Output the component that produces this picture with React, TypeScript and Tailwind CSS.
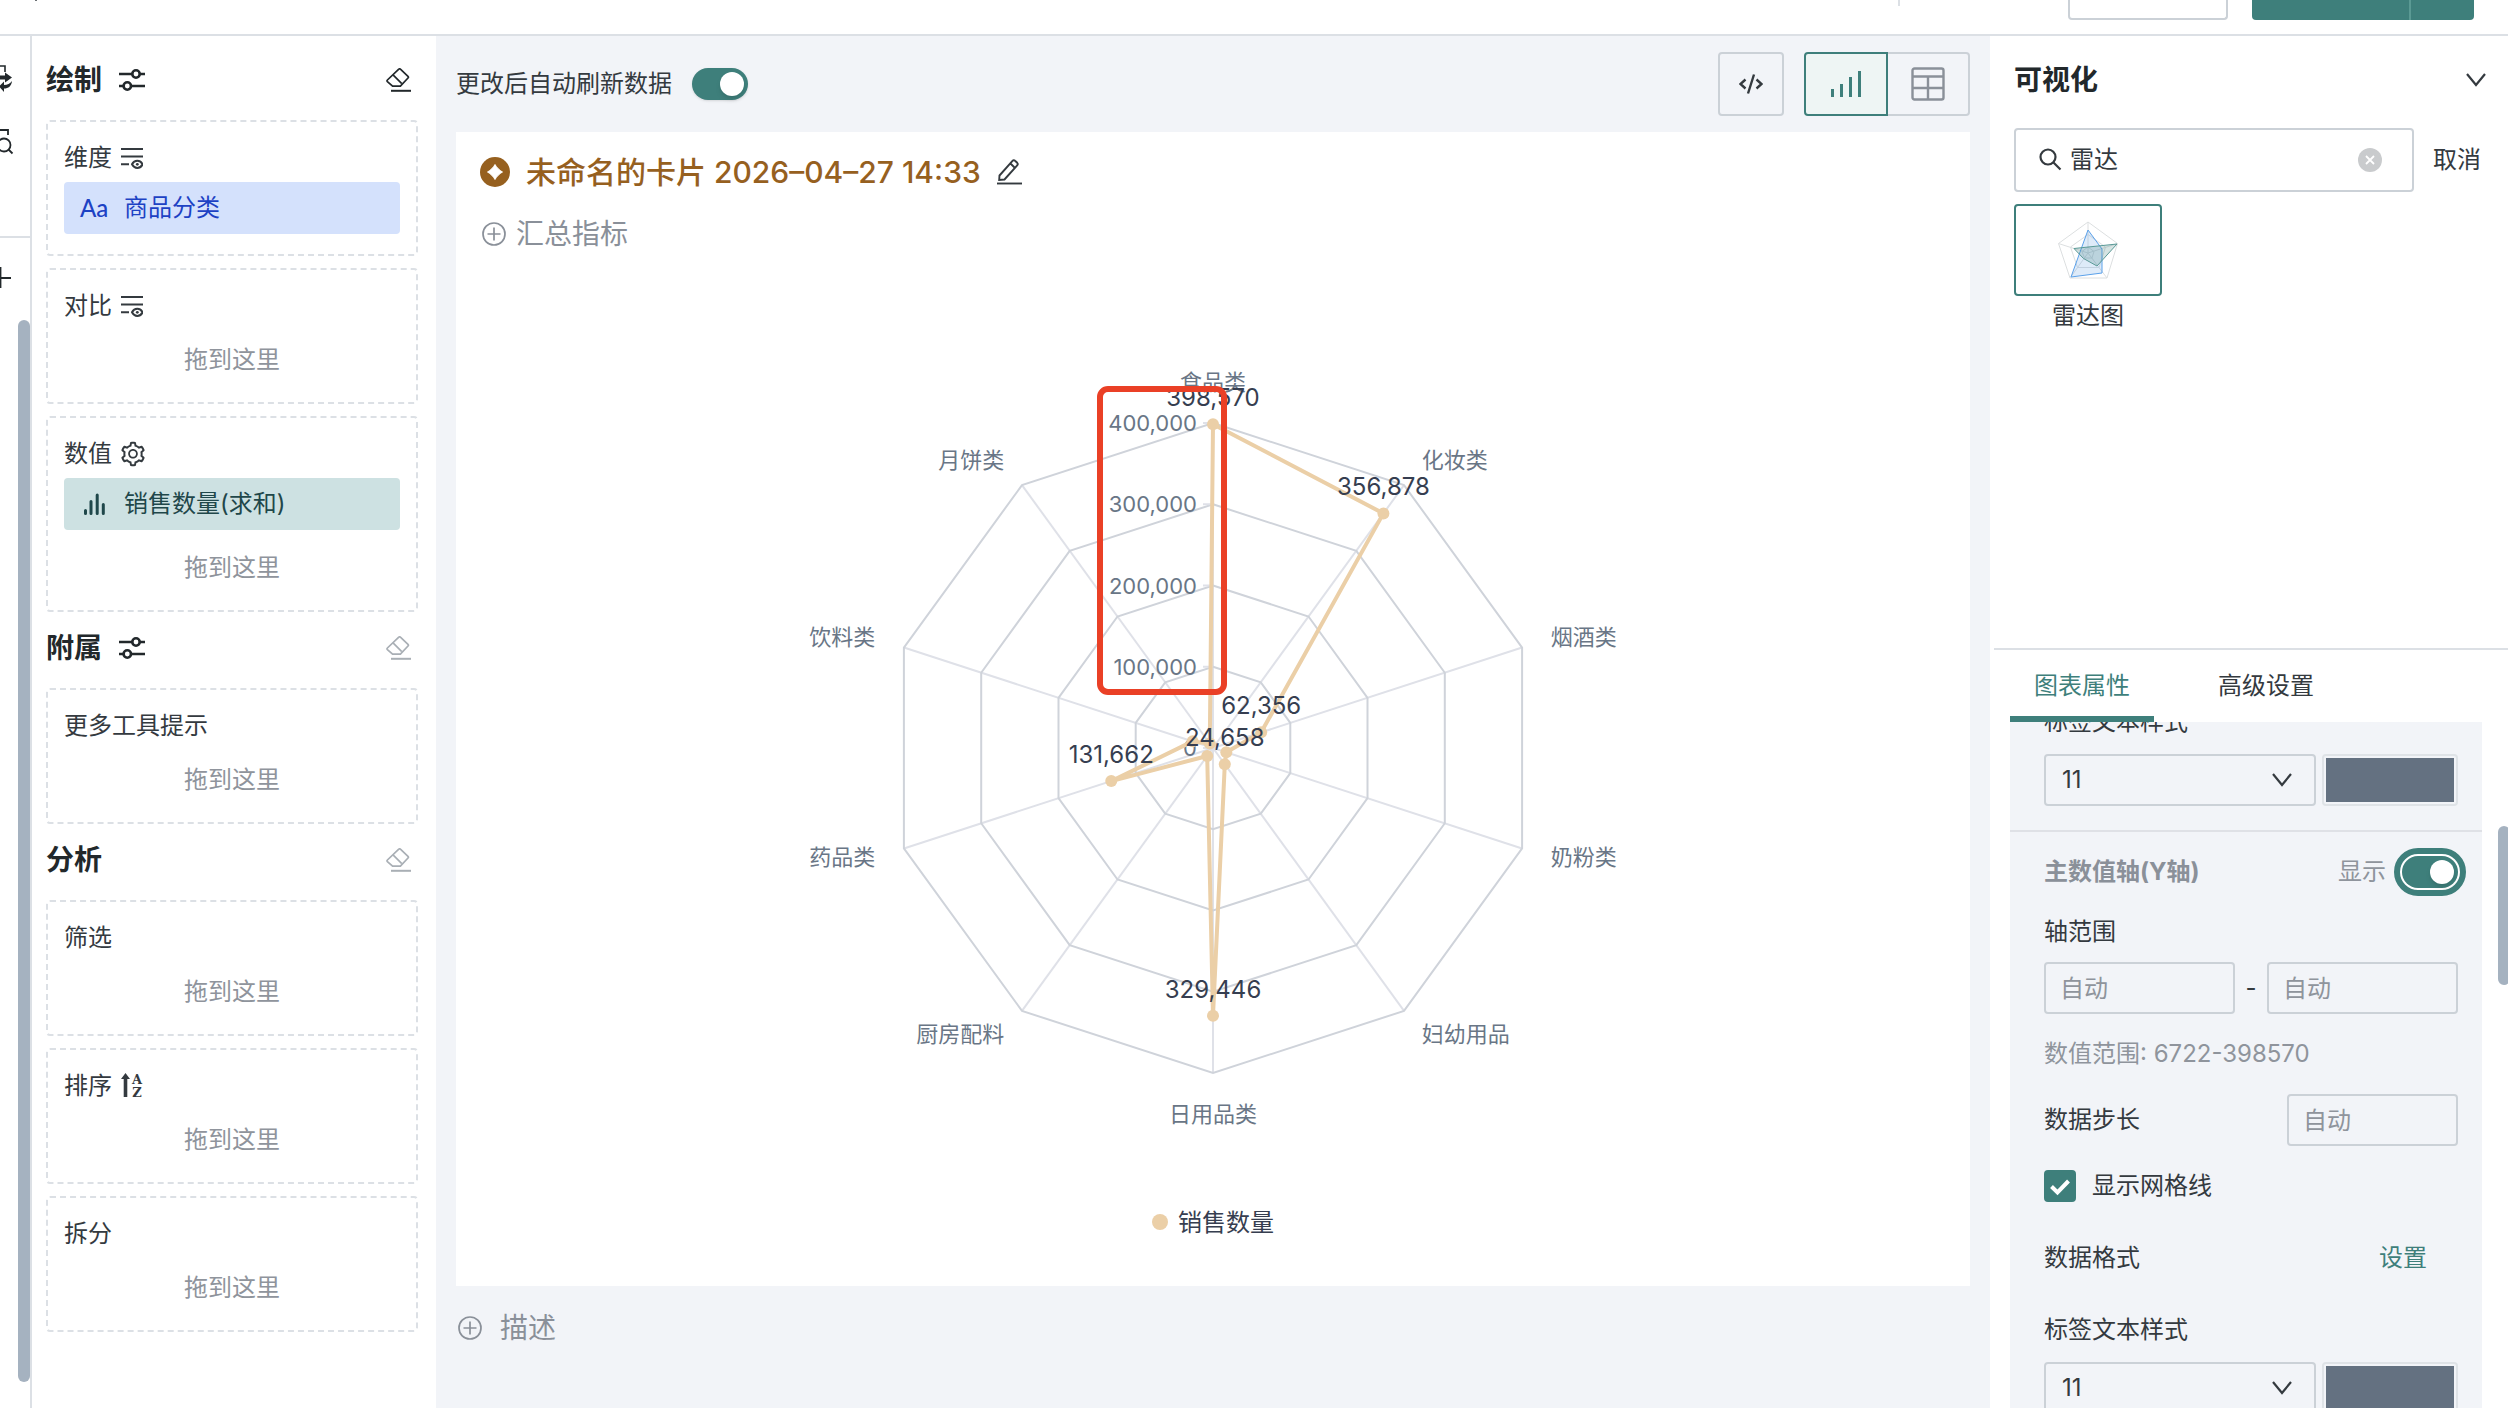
import { useState } from 'react'
import type { ReactNode } from 'react'
import clsx from 'clsx'
import { AiOutlineSetting } from 'react-icons/ai'

type RadarItem = { name: string; value: number; showValue?: boolean }

const radarData: RadarItem[] = [
  { name: '食品类', value: 398570, showValue: true },
  { name: '化妆类', value: 356878, showValue: true },
  { name: '烟酒类', value: 62356, showValue: true },
  { name: '奶粉类', value: 17231 },
  { name: '妇幼用品', value: 24658, showValue: true },
  { name: '日用品类', value: 329446, showValue: true },
  { name: '厨房配料', value: 12100 },
  { name: '药品类', value: 131662, showValue: true },
  { name: '饮料类', value: 26400 },
  { name: '月饼类', value: 6722 },
]

const MAX = 400000
const RADIUS = 325
const CX = 757
const CY = 492

function polar(index: number, r: number) {
  const angle = (Math.PI * 2 * index) / radarData.length
  return { x: CX + Math.sin(angle) * r, y: CY - Math.cos(angle) * r }
}

function toPoints(list: { x: number; y: number }[]) {
  return list.map((p) => `${p.x.toFixed(1)},${p.y.toFixed(1)}`).join(' ')
}

/* ---------- icons ---------- */

function SlidersIcon() {
  return (
    <svg className="h-6 w-[26px]" viewBox="0 0 26 24" fill="none" stroke="currentColor" strokeWidth="2.6">
      <path d="M0 6h13M21 6h5M0 18h4M12 18h14" />
      <circle cx="17" cy="6" r="3.7" />
      <circle cx="8.3" cy="18" r="3.7" />
    </svg>
  )
}

function EraserIcon() {
  return (
    <svg className="h-6 w-[26px]" viewBox="0 0 26 24" fill="none" stroke="currentColor" strokeWidth="1.7">
      <path d="M14.4 1.2 22 8.4c.5.5.5 1.1 0 1.6l-7.6 8.2H6.6L1.4 13.6c-.5-.5-.5-1.1 0-1.6L12.8 1.2c.5-.5 1.1-.5 1.6 0Z" />
      <path d="m7 6.9 8.8 8.8" />
      <path d="M5 22.8h20" strokeWidth="2" />
    </svg>
  )
}

function FieldViewIcon() {
  return (
    <svg className="h-6 w-[22px]" viewBox="0 0 22 24" fill="none" stroke="currentColor" strokeWidth="2">
      <path d="M0 3h22M0 10.500h22M0 18.300h8" />
      <path d="M11 18.300c1.200-2.400 3-3.600 5.300-3.600s4.100 1.200 5.300 3.600c-1.200 2.400-3 3.600-5.300 3.600s-4.100-1.200-5.300-3.600Z" />
      <circle cx="16.3" cy="18.300" r="1.400" fill="currentColor" stroke="none" />
    </svg>
  )
}

function SortIcon() {
  return (
    <svg className="h-7 w-6" viewBox="0 0 24 28" fill="currentColor">
      <path d="M4.500 1 9 7H6.300v18H2.700V7H0Z" />
      <text x="16" y="12" textAnchor="middle" fontSize="13" fontWeight="700" fontFamily="DejaVu Serif, serif">
        A
      </text>
      <text x="16" y="25" textAnchor="middle" fontSize="13" fontWeight="700" fontFamily="DejaVu Serif, serif">
        Z
      </text>
    </svg>
  )
}

function MeasureIcon() {
  return (
    <svg className="h-6 w-7" viewBox="0 0 28 24" fill="none" stroke="currentColor" strokeWidth="3" strokeLinecap="round">
      <path d="M5.500 18.500v3M11 9.500v12M17.200 3v18.500M23.300 12.500v9" />
    </svg>
  )
}

function PlusCircleIcon() {
  return (
    <svg className="size-6 shrink-0" viewBox="0 0 24 24" fill="none" stroke="currentColor" strokeWidth="1.700">
      <circle cx="12" cy="12" r="11" />
      <path d="M12 5.500v13M5.500 12h13" />
    </svg>
  )
}

function ChevronIcon({ className }: { className?: string }) {
  return (
    <svg className={className} viewBox="0 0 20 16" fill="none" stroke="currentColor" strokeWidth="2.200">
      <path d="m1 2 9 11 9-11" />
    </svg>
  )
}

/* ---------- form bits ---------- */

function Toggle({ id, focused }: { id: string; focused?: boolean }) {
  const [on, setOn] = useState(true)
  return (
    <button
      id={id}
      type="button"
      role="switch"
      aria-checked={on}
      onClick={() => setOn(!on)}
      className={clsx(
        'flex h-8 w-14 items-center rounded-full p-1 shadow-sm',
        on ? 'justify-end bg-[#3e7f7b]' : 'bg-gray-300',
        focused && 'outline-6 outline-offset-2 outline-[#3e7f7b] ring-2 ring-white',
      )}
    >
      <span className="size-6 rounded-full bg-white shadow-md" />
    </button>
  )
}

function TextStyleRow({ id }: { id: string }) {
  return (
    <div className="mt-4 flex gap-1.5">
      <div className="relative h-13 flex-1">
        <select
          id={id}
          className="size-full appearance-none rounded border-2 border-[#cbd1d7] bg-transparent px-4"
          defaultValue="11"
        >
          <option>11</option>
          <option>12</option>
          <option>14</option>
        </select>
        <ChevronIcon className="pointer-events-none absolute top-[18px] right-6 h-4 w-5" />
      </div>
      <button
        type="button"
        aria-label="文本颜色"
        className="h-13 w-[136px] rounded-sm border-2 border-[#dfe3e7] p-0.5"
      >
        <span className="block size-full bg-[#647181]" />
      </button>
    </div>
  )
}

const inputClass =
  'h-13 min-w-0 rounded border-2 border-[#cbd1d7] bg-transparent px-3.5 placeholder:text-[#8f949c] focus:outline-none'

/* ---------- left panel ---------- */

function SectionTitle({ title, adjustable, disabled }: { title: string; adjustable?: boolean; disabled?: boolean }) {
  return (
    <div className="flex h-[76px] items-center pr-1.5 pb-1">
      <h2 className="text-[28px] leading-10 font-bold text-[#22282b]">{title}</h2>
      {adjustable && (
        <button type="button" aria-label={`${title}设置`} className="ml-[17px] text-[#22282b]">
          <SlidersIcon />
        </button>
      )}
      <button
        type="button"
        aria-label={`清空${title}`}
        disabled={disabled}
        className={clsx('ml-auto', disabled ? 'text-[#a9afb5]' : 'text-[#22282b]')}
      >
        <EraserIcon />
      </button>
    </div>
  )
}

function DropBox({ label, icon, chip, drop = true }: { label: string; icon?: ReactNode; chip?: ReactNode; drop?: boolean }) {
  return (
    <section
      className={clsx(
        'rounded border-2 border-dashed border-[#dce0e5] pt-5 pr-4 pl-4',
        drop ? 'pb-3' : 'pb-5',
      )}
    >
      <h3 className="flex h-8 items-center gap-[9px]">
        {label}
        {icon}
      </h3>
      {chip}
      {drop && <p className="mt-2 flex h-15 items-center justify-center text-[#8f949c]">拖到这里</p>}
    </section>
  )
}

function DrawPanel() {
  return (
    <aside className="w-[404px] shrink-0 bg-white pt-2 pr-[18px] pl-3.5">
      <SectionTitle title="绘制" adjustable />
      <div className="flex flex-col gap-3">
        <DropBox
          label="维度"
          icon={<FieldViewIcon />}
          drop={false}
          chip={
            <button
              type="button"
              className="mt-2 flex h-13 w-full items-center rounded bg-[#d4e1fc] px-4 text-[#1d42c4]"
            >
              <span className="w-11 text-left font-[Lato] text-[24px] font-medium">Aa</span>
              商品分类
            </button>
          }
        />
        <DropBox label="对比" icon={<FieldViewIcon />} />
        <DropBox
          label="数值"
          icon={<AiOutlineSetting className="-mx-0.5 size-7" />}
          chip={
            <button
              type="button"
              className="mt-2 flex h-13 w-full items-center gap-4 rounded bg-[#cde1e2] px-4 text-[#1f474a]"
            >
              <MeasureIcon />
              销售数量(求和)
            </button>
          }
        />
      </div>

      <SectionTitle title="附属" adjustable disabled />
      <DropBox label="更多工具提示" />

      <SectionTitle title="分析" disabled />
      <div className="flex flex-col gap-3">
        <DropBox label="筛选" />
        <DropBox label="排序" icon={<SortIcon />} />
        <DropBox label="拆分" />
      </div>
    </aside>
  )
}

/* tail end of the dataset column, most of it is scrolled off to the left */
function DatasetEdge() {
  return (
    <div className="flex w-8 shrink-0 flex-col overflow-hidden border-r-2 border-[#dce0e5] bg-white text-[#22282b]">
      <div className="flex h-[202px] shrink-0 flex-col gap-9 border-b-2 border-[#dce0e5] pt-7">
        <svg className="h-7 w-4" viewBox="0 0 16 28" fill="none" stroke="currentColor">
          <path d="M0 2h5v6" strokeWidth="1.600" />
          <path d="M0 11.500h5V8.500l7 5-7 5v-3H0Z" fill="currentColor" stroke="none" />
          <path d="M12 17c-.500 5-3.500 7.500-8 7.500V28l-5-5.500 5-5v3.500c3.500 0 6-1.200 8-4Z" fill="currentColor" stroke="none" />
        </svg>
        <svg className="h-7 w-4" viewBox="0 0 16 28" fill="none" stroke="currentColor" strokeWidth="1.800">
          <path d="M0 2h8v5" />
          <circle cx="4" cy="17" r="6.500" />
          <path d="m8.500 21.500 4 4" />
        </svg>
      </div>
      <svg className="mt-[26px] h-6 w-3 shrink-0" viewBox="0 0 12 24" fill="none" stroke="currentColor" strokeWidth="2.200">
        <path d="M0 14h11M.300 3v21" />
      </svg>
      <div className="mt-8 mb-[26px] ml-auto w-3 grow rounded-full bg-[#a5b2c0]" />
    </div>
  )
}

/* ---------- chart ---------- */

function RadarChart() {
  const rings = [0.25, 0.5, 0.75, 1]
  const shape = radarData.map((d, i) => polar(i, (d.value / MAX) * RADIUS))

  return (
    <svg
      className="min-h-0 w-full flex-1"
      viewBox="0 0 1514 1030"
      fill="none"
      role="img"
      aria-label="销售数量雷达图"
    >
      {radarData.map((d, i) => {
        const end = polar(i, RADIUS)
        return <line key={d.name} x1={CX} y1={CY} x2={end.x} y2={end.y} stroke="#dfe1e8" strokeWidth="2" />
      })}
      {rings.map((r) => (
        <polygon key={r} points={toPoints(radarData.map((_, i) => polar(i, RADIUS * r)))} stroke="#cfd3da" strokeWidth="2" />
      ))}
      {[0, ...rings].map((r) => (
        <g key={r}>
          <line x1={CX - 10} x2={CX} y1={CY - RADIUS * r} y2={CY - RADIUS * r} stroke="#dfe1e8" strokeWidth="2" />
          <text x={CX - 16} y={CY - RADIUS * r + 8} textAnchor="end" fontSize="22" fill="#697686">
            {(MAX * r).toLocaleString('en-US')}
          </text>
        </g>
      ))}
      {radarData.map((d, i) => {
        const p = polar(i, RADIUS + 30)
        const side = Math.round(p.x - CX)
        const y = i === 0 ? p.y - 3 : i === 5 ? p.y + 19 : p.y + 7
        return (
          <text
            key={d.name}
            x={p.x}
            y={y}
            textAnchor={side === 0 ? 'middle' : side > 0 ? 'start' : 'end'}
            fontSize="22"
            fill="#697686"
          >
            {d.name}
          </text>
        )
      })}
      <polygon points={toPoints(shape)} stroke="#ebcfa7" strokeWidth="4" strokeLinejoin="bevel" />
      {shape.map((p, i) => (
        <circle key={i} cx={p.x} cy={p.y} r="6" fill="#ebcfa7" />
      ))}
      {radarData.map(
        (d, i) =>
          d.showValue && (
            <text key={d.name} x={shape[i].x} y={shape[i].y - 18} textAnchor="middle" fontSize="24" fill="#363e50">
              {d.value.toLocaleString('en-US')}
            </text>
          ),
      )}
      <rect x="644" y="133" width="124" height="303" rx="8" stroke="#ea4026" strokeWidth="6" />
      <circle cx="704" cy="966" r="8" fill="#ebcfa7" />
      <text x="722" y="975" fontSize="24" fill="#363e50">
        销售数量
      </text>
    </svg>
  )
}

function CardEditor() {
  return (
    <main className="flex min-w-0 flex-1 flex-col px-5">
      <div className="flex h-24 shrink-0 items-center">
        <label htmlFor="auto-refresh" className="mr-5">
          更改后自动刷新数据
        </label>
        <Toggle id="auto-refresh" />
        <button
          type="button"
          aria-label="代码"
          className="ml-auto flex h-16 w-[66px] items-center justify-center rounded border-2 border-[#cbd1d7]"
        >
          <svg className="h-5 w-6" viewBox="0 0 24 20" fill="none" stroke="currentColor" strokeWidth="2.400">
            <path d="M6.500 5.500 1.500 10l5 4.500M17.500 5.500l5 4.500-5 4.500M15 .500 9 19.500" />
          </svg>
        </button>
        <div className="ml-5 flex">
          <button
            type="button"
            aria-label="图表"
            className="flex h-16 w-21 items-center justify-center rounded-l border-2 border-[#3e7f7b] bg-[#eef5f4] text-[#3e7f7b]"
          >
            <svg className="h-[26px] w-[30px]" viewBox="0 0 30 26" fill="currentColor">
              <path d="M0 18h3v8H0ZM9 13h3v13H9ZM18 6h3v20h-3ZM27 0h3v26h-3Z" />
            </svg>
          </button>
          <button
            type="button"
            aria-label="表格"
            className="flex h-16 w-[82px] items-center justify-center rounded-r border-2 border-l-0 border-[#cbd1d7] text-[#8a9099]"
          >
            <svg className="size-[34px]" viewBox="0 0 34 34" fill="none" stroke="currentColor" strokeWidth="2.400">
              <rect x="1.500" y="1.500" width="31" height="31" rx="2" />
              <path d="M1.500 9.500h31M1.500 21h31M17 9.500v23" />
            </svg>
          </button>
        </div>
      </div>

      <section className="flex min-h-0 flex-1 flex-col bg-white">
        <div className="flex h-20 shrink-0 items-center px-6">
          <svg className="size-[30px]" viewBox="0 0 30 30">
            <circle cx="15" cy="15" r="15" fill="#96601f" />
            <path d="M15 7.500c1.600 3 4.500 5.900 7.500 7.500-3 1.600-5.900 4.500-7.500 7.500-1.600-3-4.500-5.900-7.500-7.500 3-1.600 5.900-4.500 7.500-7.500Z" fill="#fff" stroke="#fff" strokeLinejoin="round" />
          </svg>
          <h1 className="ml-4 text-[30px] leading-10 font-medium text-[#96601f]">未命名的卡片 2026–04–27 14:33</h1>
          <button type="button" aria-label="编辑标题" className="ml-4">
            <svg className="h-7 w-[26px]" viewBox="0 0 26 28" fill="none" stroke="currentColor" strokeWidth="1.900">
              <path d="M2.500 17.500 15.500 2.800c.700-.800 1.800-.800 2.500-.100l2.200 2.100c.700.700.700 1.700 0 2.500L7.500 21.500l-5.300.500ZM13.500 5.500l4.500 4.500" />
              <path d="M0 25.500h25" />
            </svg>
          </button>
        </div>
        <button type="button" className="flex h-11 shrink-0 items-center gap-2.5 px-[26px] text-[28px] text-[#8a9099]">
          <PlusCircleIcon />
          汇总指标
        </button>
        <RadarChart />
      </section>

      <div className="flex h-[122px] shrink-0 items-start pt-[22px]">
        <button type="button" className="flex items-center gap-4.5 px-0.5 text-[28px] leading-10 text-[#8a9099]">
          <PlusCircleIcon />
          描述
        </button>
      </div>
    </main>
  )
}

/* ---------- right panel ---------- */

function RadarThumb() {
  return (
    <svg className="size-15" viewBox="0 0 60 60" fill="none">
      <g stroke="#dcdfe0">
        <path d="M30 2 59.500 23.500 49 58H12L.500 23.500Z" />
        <path d="M30 14.500 47.500 27 41 47.500H19.500L12.500 27Z" />
        <path d="M30 27 36 31.500 34 38H26.500L24 31.500Z" />
        <path d="M30 33V2M30 33l29.500-9.500M30 33l19 25M30 33 12 58M30 33 .500 23.500" />
      </g>
      <path d="M30 10 44 29v24L13 57Z" fill="#5a9be0" fillOpacity=".2" stroke="#5ba1ea" />
      <path d="M59 24 39 46 25.500 38.500 16 28.500Z" fill="#3e7f7b" fillOpacity=".22" stroke="#5a9a97" />
    </svg>
  )
}

function ChartPicker() {
  const [keyword, setKeyword] = useState('雷达')
  return (
    <section className="h-[612px] shrink-0 pr-5 pl-6">
      <div className="flex h-22 items-center justify-between">
        <h2 className="text-[28px] leading-10 font-bold text-[#22282b]">可视化</h2>
        <button type="button" aria-label="收起" className="mr-0.5">
          <ChevronIcon className="h-4 w-5" />
        </button>
      </div>
      <div className="mt-1 flex items-center justify-between">
        <div className="flex h-16 w-[400px] items-center rounded border-2 border-[#cbd1d7] pr-[30px] pl-[23px]">
          <svg className="size-6 shrink-0" viewBox="0 0 24 24" fill="none" stroke="currentColor" strokeWidth="2.200">
            <circle cx="9" cy="9" r="7.500" />
            <path d="m14.500 14.500 7 7" />
          </svg>
          <input
            aria-label="搜索图表"
            className="ml-[7px] min-w-0 flex-1 focus:outline-none"
            value={keyword}
            onChange={(e) => setKeyword(e.target.value)}
          />
          <button type="button" aria-label="清除" onClick={() => setKeyword('')}>
            <svg className="size-6" viewBox="0 0 24 24">
              <circle cx="12" cy="12" r="12" fill="#c9cbcd" />
              <path d="m8 8 8 8M16 8l-8 8" stroke="#fff" strokeWidth="1.800" />
            </svg>
          </button>
        </div>
        <button type="button" className="mr-[7px]">
          取消
        </button>
      </div>
      <button type="button" className="mt-3 flex flex-col items-center gap-1">
        <span className="flex h-[92px] w-[148px] items-center justify-center rounded border-2 border-[#3e7f7b]">
          <RadarThumb />
        </span>
        <span className="leading-8">雷达图</span>
      </button>
    </section>
  )
}

function PropertyPanel() {
  return (
    <section className="flex min-h-0 flex-1 flex-col">
      <div role="tablist" className="ml-1 flex h-[74px] shrink-0 gap-4 border-t-2 border-[#dce0e5] pl-4">
        <button
          type="button"
          role="tab"
          aria-selected="true"
          className="border-b-6 border-[#3e7f7b] px-6 pt-1.5 text-[#3e7f7b]"
        >
          图表属性
        </button>
        <button type="button" role="tab" aria-selected="false" className="border-b-6 border-transparent px-12 pt-1.5">
          高级设置
        </button>
      </div>

      <div className="flex min-h-0 flex-1">
        <div className="ml-5 w-[472px] shrink-0 overflow-hidden bg-[#f2f4f8]">
          <div className="-mt-4 pr-6 pl-[34px]">
            <label htmlFor="x-font-size" className="block h-8 leading-8">
              标签文本样式
            </label>
            <TextStyleRow id="x-font-size" />
          </div>

          <div className="mt-6 border-t-2 border-[#dfe1e6] pt-4 pr-6 pl-[34px]">
            <div className="flex h-12 items-center">
              <h3 className="font-bold text-[#8a9099]">主数值轴(Y轴)</h3>
              <label htmlFor="y-axis" className="mr-4 ml-auto text-[#8f949c]">
                显示
              </label>
              <Toggle id="y-axis" focused />
            </div>

            <label htmlFor="range-min" className="mt-5 block h-8 leading-8">
              轴范围
            </label>
            <div className="mt-3.5 flex items-center">
              <input id="range-min" className={clsx(inputClass, 'flex-1')} placeholder="自动" />
              <span className="w-8 text-center">-</span>
              <input aria-label="轴范围最大值" className={clsx(inputClass, 'flex-1')} placeholder="自动" />
            </div>
            <p className="mt-6 h-8 leading-8 text-[#8f949c]">数值范围: 6722-398570</p>

            <div className="mt-6 flex h-13 items-center justify-between">
              <label htmlFor="step">数据步长</label>
              <input id="step" className={clsx(inputClass, 'w-[171px]')} placeholder="自动" />
            </div>

            <label className="mt-6 flex h-8 items-center gap-4">
              <span className="relative size-8">
                <input
                  type="checkbox"
                  defaultChecked
                  className="peer block size-8 appearance-none rounded border-2 border-[#cbd1d7] checked:border-[#3e7f7b] checked:bg-[#3e7f7b]"
                />
                <svg
                  className="pointer-events-none absolute inset-0 hidden size-8 peer-checked:block"
                  viewBox="0 0 32 32"
                  fill="none"
                  stroke="#fff"
                  strokeWidth="4"
                >
                  <path d="m7.500 16.500 6 6L24.500 11" />
                </svg>
              </span>
              显示网格线
            </label>

            <div className="mt-10 flex h-8 items-center justify-between pr-[31px]">
              数据格式
              <button type="button" className="text-[#3e7f7b]">
                设置
              </button>
            </div>

            <label htmlFor="y-font-size" className="mt-10 block h-8 leading-8">
              标签文本样式
            </label>
            <TextStyleRow id="y-font-size" />
          </div>
        </div>
        <div className="mt-[104px] ml-4 h-[159px] w-3 shrink-0 rounded-full bg-[#a5b2c0]" />
      </div>
    </section>
  )
}

export default function App() {
  return (
    <div className="flex h-screen flex-col overflow-hidden bg-[#f2f4f8] font-[Inter,'Noto_Sans_CJK_SC',sans-serif] text-[24px] leading-8 text-[#343a3f]">
      <header className="flex h-9 shrink-0 items-start justify-end border-b-2 border-[#dce0e5] bg-white pr-[34px]">
        <span className="mr-auto ml-[35px] h-px w-0.5 bg-[#6b7074]" />
        <span className="mr-[168px] h-1.5 w-0.5 bg-[#dce0e5]" />
        <button
          type="button"
          aria-label="预览"
          className="mr-6 h-5 w-40 rounded-b border-2 border-t-0 border-[#cbd1d7]"
        />
        <button type="button" aria-label="保存" className="h-5 w-[157px] rounded-bl bg-[#3e7f7b]" />
        <button
          type="button"
          aria-label="更多保存选项"
          className="h-5 w-[65px] rounded-br border-l-2 border-[#5b9a94] bg-[#3e7f7b]"
        />
      </header>
      <div className="flex min-h-0 flex-1">
        <DatasetEdge />
        <DrawPanel />
        <CardEditor />
        <aside className="flex w-[518px] shrink-0 flex-col overflow-hidden bg-white">
          <ChartPicker />
          <PropertyPanel />
        </aside>
      </div>
    </div>
  )
}
